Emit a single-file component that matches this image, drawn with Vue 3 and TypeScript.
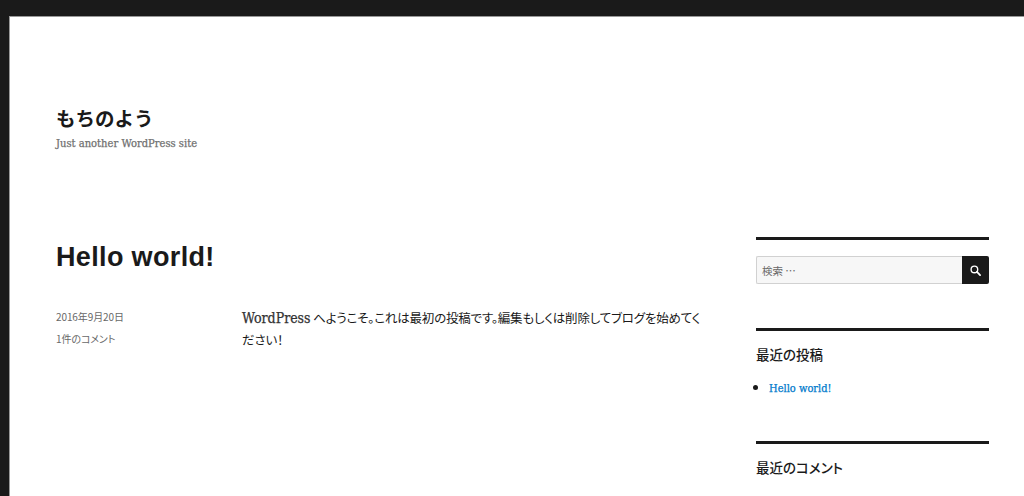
<script setup lang="ts">
const title = 'もちのよう'
const recentPosts: string[] = ['Hello world!']
</script>

<template>
  <div class="frame">
    <div class="page">
      <header class="site-header">
        <h1 class="site-title">{{ title }}</h1>
        <p class="tagline">Just another WordPress site</p>
      </header>
      <div class="columns">
        <main class="main">
          <h2 class="post-title">Hello world!</h2>
          <div class="post-body">
            <div class="meta">
              <span>2016年9月20日</span>
              <span>1件のコメント</span>
            </div>
            <p class="content">
              <span class="latin">WordPress</span> へようこそ。これは最初の投稿です。編集もしくは削除してブログを始めてください！
            </p>
          </div>
        </main>
        <aside class="sidebar">
          <section class="widget search-widget">
            <form class="search" @submit.prevent>
              <input class="search-input" type="text" placeholder="検索 …" />
              <button class="search-btn" type="submit" aria-label="検索">
                <svg width="11" height="11" viewBox="0 0 12 12" fill="none">
                  <circle cx="4.8" cy="4.8" r="3.6" stroke="#fff" stroke-width="1.5" />
                  <path d="M7.6 7.6 11 11" stroke="#fff" stroke-width="1.9" stroke-linecap="round" />
                </svg>
              </button>
            </form>
          </section>
          <section class="widget recent-widget">
            <h3 class="widget-title">最近の投稿</h3>
            <ul class="list">
              <li v-for="p in recentPosts" :key="p"><a href="#" class="link">{{ p }}</a></li>
            </ul>
          </section>
          <section class="widget last-widget">
            <h3 class="widget-title">最近のコメント</h3>
          </section>
        </aside>
      </div>
    </div>
  </div>
</template>

<style>
html, body { margin: 0; background: #1a1a1a; overflow: hidden; }
</style>

<style scoped>
.frame {
  height: 496px;
  box-sizing: border-box;
  padding: 16px 0 0 9px;
  background: #1a1a1a;
  overflow: hidden;
  font-family: "Liberation Serif", "Noto Sans CJK JP", serif;
  color: #1a1a1a;
}
.page {
  background: #fff;
  height: 480px;
  box-sizing: border-box;
  padding: 86px 35px 0 46px;
  border-left: 1px solid #999;
  border-top: 1px solid #999;
}
.site-title {
  margin: 0;
  font: 700 19.5px/30px "Noto Sans CJK JP", sans-serif;
}
.tagline {
  margin: 2px 0 0;
  font: 400 11.1px/18px "DejaVu Serif Condensed", "DejaVu Serif", serif;
  -webkit-text-stroke: 0.25px #707070;
  color: #707070;
}
.columns {
  display: flex;
  justify-content: space-between;
  margin-top: 84px;
}
.main { width: 660px; }
.post-title {
  margin: 0;
  font: 700 27px/40px "Liberation Sans", sans-serif;
  letter-spacing: 0.35px;
}
.post-body {
  display: flex;
  margin-top: 30px;
}
.meta {
  width: 186px;
  flex: none;
  display: flex;
  flex-direction: column;
  gap: 6px;
  padding-top: 2px;
  font: 400 10px/16px "Noto Sans CJK JP", sans-serif;
  font-feature-settings: "palt";
  letter-spacing: -0.1px;
  color: #686868;
}
.content {
  margin: 0;
  width: 460px;
  font: 400 12.5px/22px "Noto Sans CJK JP", sans-serif;
  font-feature-settings: "palt";
  letter-spacing: -0.2px;
}
.latin {
  font: 400 14px/22px "DejaVu Serif Condensed", "DejaVu Serif", serif;
  letter-spacing: 0;
  -webkit-text-stroke: 0.25px #333;
  color: #333;
}
.sidebar { width: 233px; }
.widget { border-top: 3px solid #1a1a1a; }
.search-widget { padding-top: 16px; height: 72px; }
.recent-widget { height: 110px; }
.search { display: flex; height: 28px; }
.search-input {
  flex: 1;
  min-width: 0;
  box-sizing: border-box;
  padding: 0 5px;
  border: 1px solid #d1d1d1;
  border-right: 0;
  border-radius: 2px 0 0 2px;
  background: #f7f7f7;
  font: 400 10.5px "Noto Sans CJK JP", sans-serif;
  outline: none;
}
.search-input::placeholder { color: #686868; opacity: 1; }
.search-btn {
  width: 27px;
  padding: 0;
  border: 0;
  border-radius: 0 2px 2px 0;
  background: #1a1a1a;
  display: flex;
  align-items: center;
  justify-content: center;
}
.widget-title {
  margin: 13px 0 0;
  font: 500 13.5px/20px "Noto Sans CJK JP", sans-serif;
  font-feature-settings: "palt";
}
.list { margin: 13px 0 0; padding: 0 0 0 13px; font: 400 11px/20px "DejaVu Serif Condensed", "DejaVu Serif", serif; }
.list li::marker { font-size: 15px; }
.link {
  color: #007acc;
  -webkit-text-stroke: 0.25px #007acc;
  text-decoration: none;
}
</style>
